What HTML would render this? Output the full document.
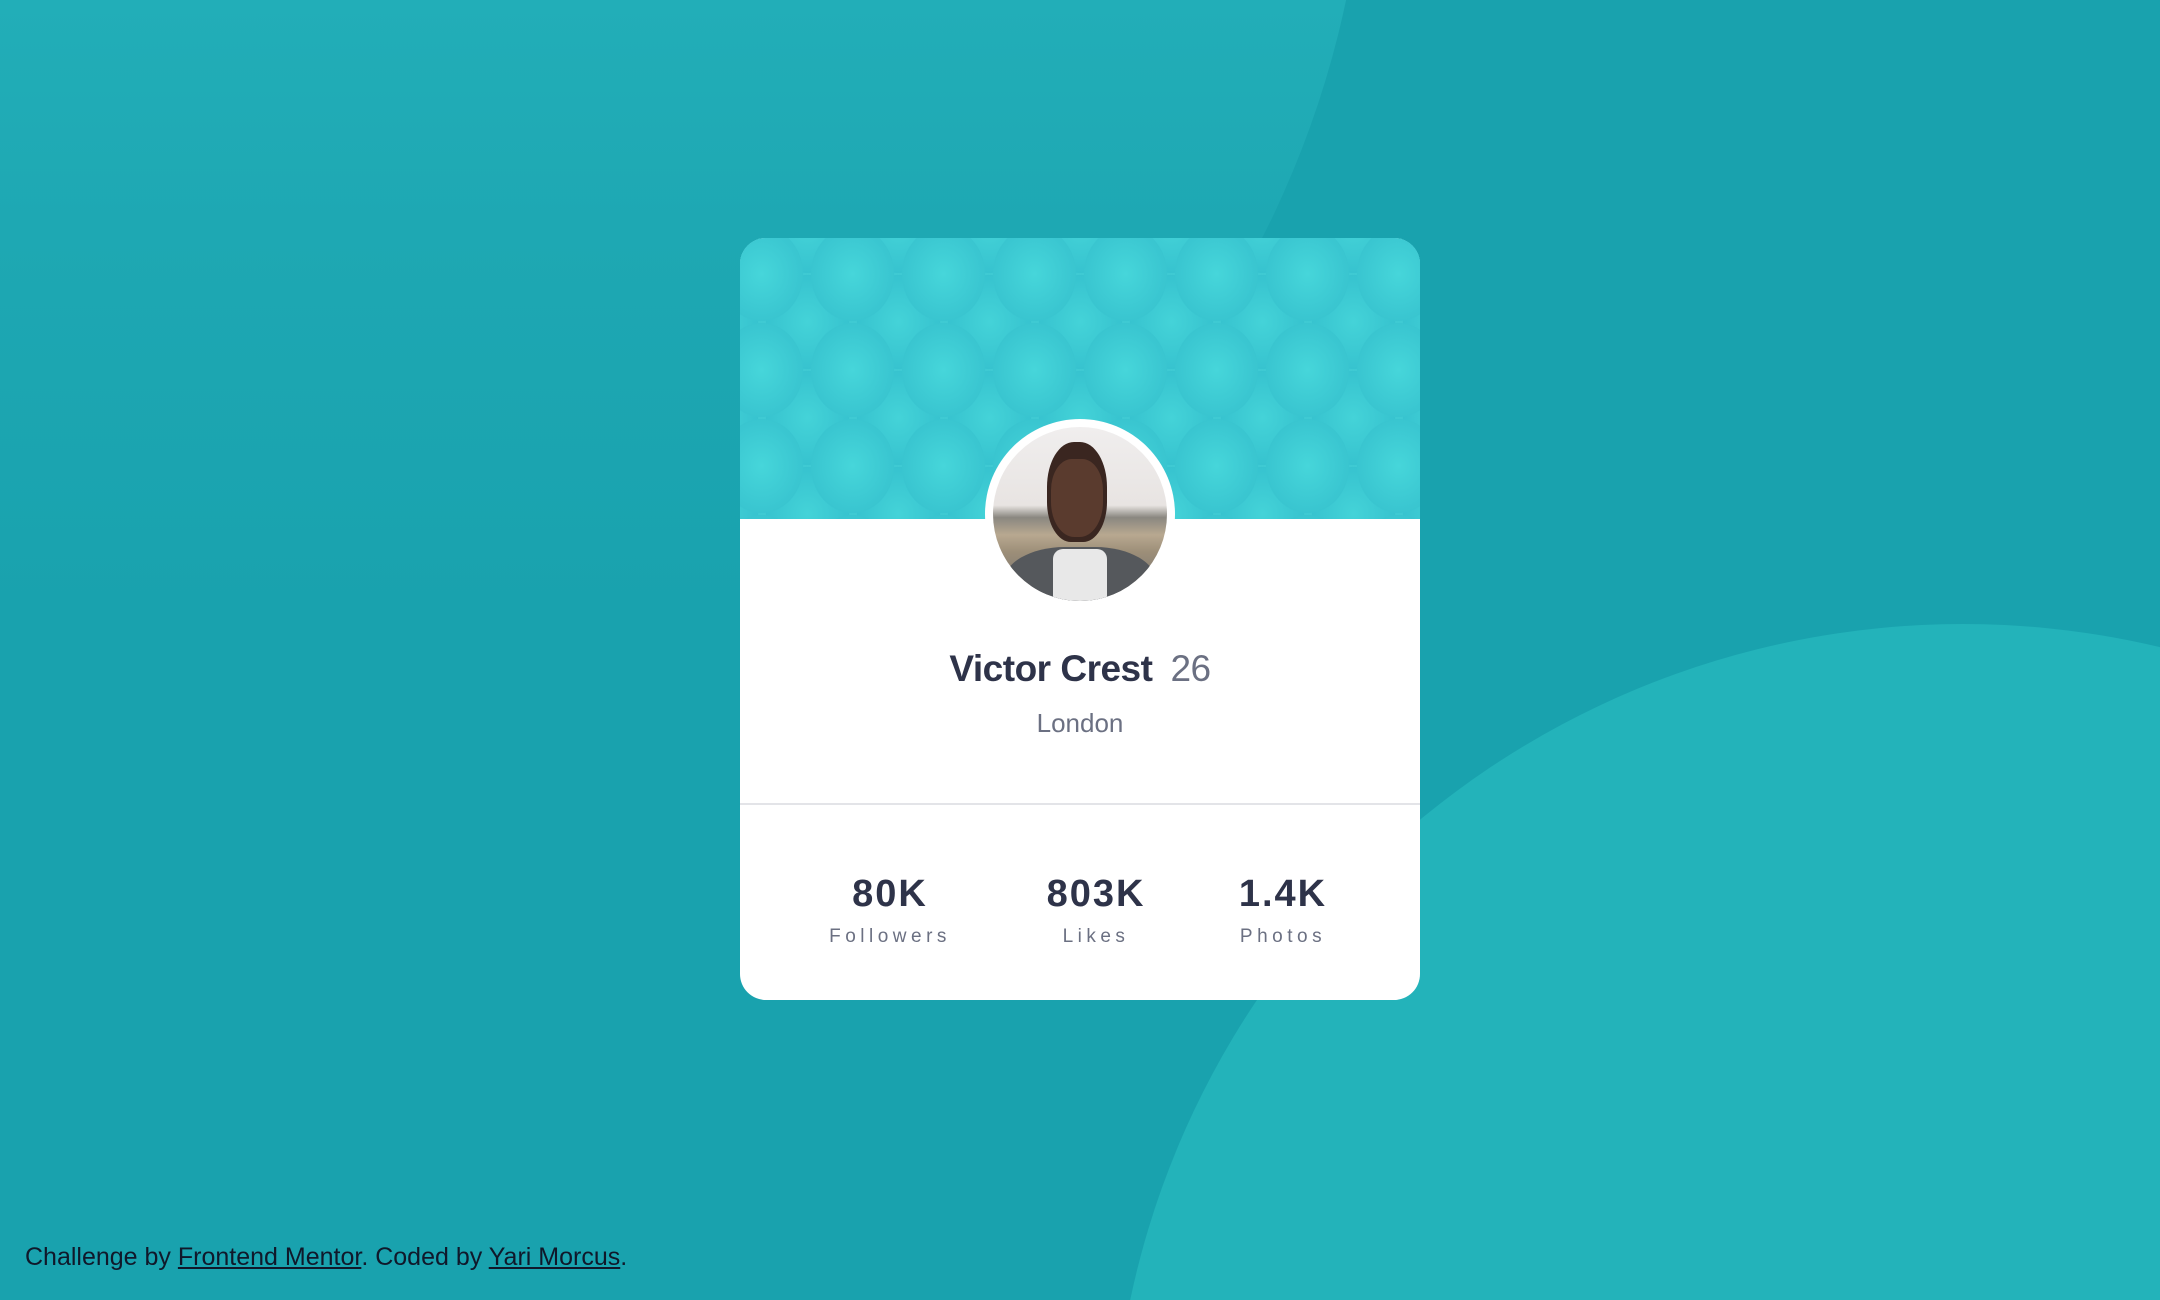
<!DOCTYPE html>
<html><head><meta charset="utf-8"><style>
*{margin:0;padding:0;box-sizing:border-box}
html,body{width:2160px;height:1300px;overflow:hidden}
body{background:#19a2ae;position:relative;font-family:"Liberation Sans",sans-serif}
.bg{position:absolute;left:0;top:0;width:2160px;height:1300px;overflow:hidden}
.c1{position:absolute;left:-567px;top:-1167px;width:1934px;height:1934px;border-radius:50%;background:linear-gradient(to bottom,#23afb9 0%,#22aeb8 60%,#1ea8b3 72%,#19a2ae 92%)}
.c2{position:absolute;left:1112px;top:624px;width:1702px;height:1702px;border-radius:50%;background:#23b3ba}
.card{position:absolute;left:740px;top:238px;width:680px;height:762px;background:#fff;border-radius:26px;overflow:hidden}
.head{height:281px;background-color:#3fcad3;
background-image:radial-gradient(ellipse 46px 52px at 50% 50%,#46d6da 0,#39c5d0 90%,rgba(0,0,0,0) 91%),radial-gradient(ellipse 46px 52px at 50% 50%,#44d3d8 0,#37c3cf 90%,rgba(0,0,0,0) 91%);
background-size:91px 96px,91px 96px;background-position:-24px -12px,22px 36px}
.av{position:absolute;left:985px;top:419px;width:190px;height:190px;border-radius:50%;background:#fff;z-index:2}
.av .img{position:absolute;left:8px;top:8px;width:174px;height:174px;border-radius:50%;overflow:hidden;
background:linear-gradient(#f0eeee 0,#e8e4e2 45%,#8a8780 52%,#b8a890 62%,#9c8e78 72%,#6c6c70 100%)}
.head2{position:absolute;left:54px;top:15px;width:60px;height:100px;border-radius:45% 45% 40% 40%;background:#3a2620}
.face{position:absolute;left:58px;top:32px;width:52px;height:78px;border-radius:40% 40% 45% 45%;background:#5a3b2e}
.jacket{position:absolute;left:10px;top:120px;width:154px;height:90px;border-radius:40% 40% 0 0;background:#55585c}
.shirt{position:absolute;left:60px;top:122px;width:54px;height:70px;background:#e8e8e8;border-radius:10px}
.name{position:absolute;left:0;width:680px;top:410px;text-align:center;font-size:37px;font-weight:bold;color:#2e3349;letter-spacing:-0.5px}
.name span{font-weight:normal;color:#6b7082;margin-left:18px}
.loc{position:absolute;left:0;width:680px;top:470px;text-align:center;font-size:26px;color:#6b7082}
.div{position:absolute;left:0;top:565px;width:680px;height:2px;background:#e3e4e8}
.st{position:absolute;top:635px;text-align:center;width:200px;margin-left:-100px}
.st b{display:block;font-size:38px;color:#2e3349;letter-spacing:2px}
.st i{display:block;font-style:normal;font-size:19px;color:#6b7082;letter-spacing:4.5px;margin-top:10px}
.foot{position:absolute;left:25px;top:1243px;font-size:25px;color:#10182a;white-space:nowrap}
.foot a{color:#10182a;text-decoration:underline}
</style></head><body>
<div class="bg"><div class="c1"></div><div class="c2"></div></div>
<div class="card">
<div class="head"></div>
<div class="name">Victor Crest<span>26</span></div>
<div class="loc">London</div>
<div class="div"></div>
<div class="st" style="left:150px"><b>80K</b><i>Followers</i></div>
<div class="st" style="left:356px"><b>803K</b><i>Likes</i></div>
<div class="st" style="left:543px"><b>1.4K</b><i>Photos</i></div>
</div>
<div class="av"><div class="img"><div class="jacket"></div><div class="shirt"></div><div class="head2"></div><div class="face"></div></div></div>
<div class="foot">Challenge by <a>Frontend Mentor</a>. Coded by <a>Yari Morcus</a>.</div>
</body></html>
